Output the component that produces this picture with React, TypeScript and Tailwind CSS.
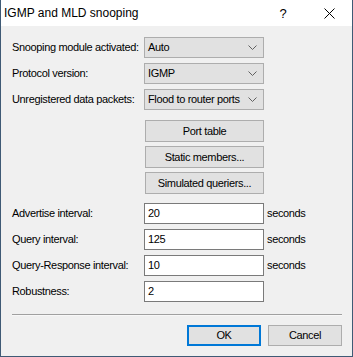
import React from 'react';

const font = { fontFamily: '"Liberation Sans", Arial, sans-serif' };

const Chevron = () => (
  <svg width="9" height="5" viewBox="0 0 9 5" className="shrink-0">
    <path d="M0.5 0.5 L4.5 4.5 L8.5 0.5" fill="none" stroke="#606060" strokeWidth="1" />
  </svg>
);

const Combo = ({ value }: { value: string }) => (
  <div className="flex items-center justify-between w-[120px] h-[21px] bg-[#e1e1e1] border border-[#adadad] pl-[3px] pr-[6px]">
    <span>{value}</span>
    <Chevron />
  </div>
);

const Btn = ({ label }: { label: string }) => (
  <div className="flex items-center justify-center ml-px w-[119px] h-[22px] bg-[#e1e1e1] border border-[#adadad]">
    {label}
  </div>
);

const Field = ({ value, unit }: { value: string; unit?: string }) => (
  <div className="flex items-center gap-[3px]">
    <div className="flex items-center w-[120px] h-[21px] bg-white border border-[#7a7a7a] pl-[3px]">{value}</div>
    {unit && <span>{unit}</span>}
  </div>
);

export default function App() {
  const combos = [
    ['Snooping module activated:', 'Auto'],
    ['Protocol version:', 'IGMP'],
    ['Unregistered data packets:', 'Flood to router ports'],
  ];
  const fields: [string, string, string?][] = [
    ['Advertise interval:', '20', 'seconds'],
    ['Query interval:', '125', 'seconds'],
    ['Query-Response interval:', '10', 'seconds'],
    ['Robustness:', '2'],
  ];

  return (
    <div className="w-[353px] h-[357px] flex flex-col bg-[#f0f0f0] border-x border-b border-[#3f5a75] text-[11px] leading-[13px] tracking-[-0.35px] whitespace-nowrap text-black" style={font}>
      {/* title bar */}
      <div className="h-[26px] shrink-0 bg-white flex items-center pl-[3px] text-[12px] tracking-normal">
        <span className="flex-1">IGMP and MLD snooping</span>
        <span className="w-[46px] text-center text-[13px]">?</span>
        <span className="w-[46px] flex justify-center">
          <svg width="11" height="11" viewBox="0 0 11 11">
            <path d="M0.5 0.5 L10.5 10.5 M10.5 0.5 L0.5 10.5" stroke="#000" strokeWidth="1" />
          </svg>
        </span>
      </div>

      <div className="flex flex-col pl-[11px] pt-[11px]">
        <div className="flex flex-col gap-[5px]">
          {combos.map(([l, v]) => (
            <div key={l} className="flex items-center">
              <span className="w-[132px]">{l}</span>
              <Combo value={v} />
            </div>
          ))}
        </div>

        <div className="flex flex-col gap-[4px] mt-[10px] ml-[132px]">
          <Btn label="Port table" />
          <Btn label="Static members..." />
          <Btn label="Simulated queriers..." />
        </div>

        <div className="flex flex-col gap-[5px] mt-[9px]">
          {fields.map(([l, v, u]) => (
            <div key={l} className="flex items-center">
              <span className="w-[132px]">{l}</span>
              <Field value={v} unit={u} />
            </div>
          ))}
        </div>

        <div className="mt-[12px] mr-[10px] h-[2px] bg-[#a0a0a0] border-b border-[#f8f8f8]" />

        <div className="flex justify-end gap-[7px] mt-[9px] mr-[10px]">
          <div className="flex items-center justify-center w-[74px] h-[21px] bg-[#e1e1e1] border-2 border-[#0078d7]">OK</div>
          <div className="flex items-center justify-center w-[74px] h-[21px] bg-[#e1e1e1] border border-[#adadad]">Cancel</div>
        </div>
      </div>
    </div>
  );
}
